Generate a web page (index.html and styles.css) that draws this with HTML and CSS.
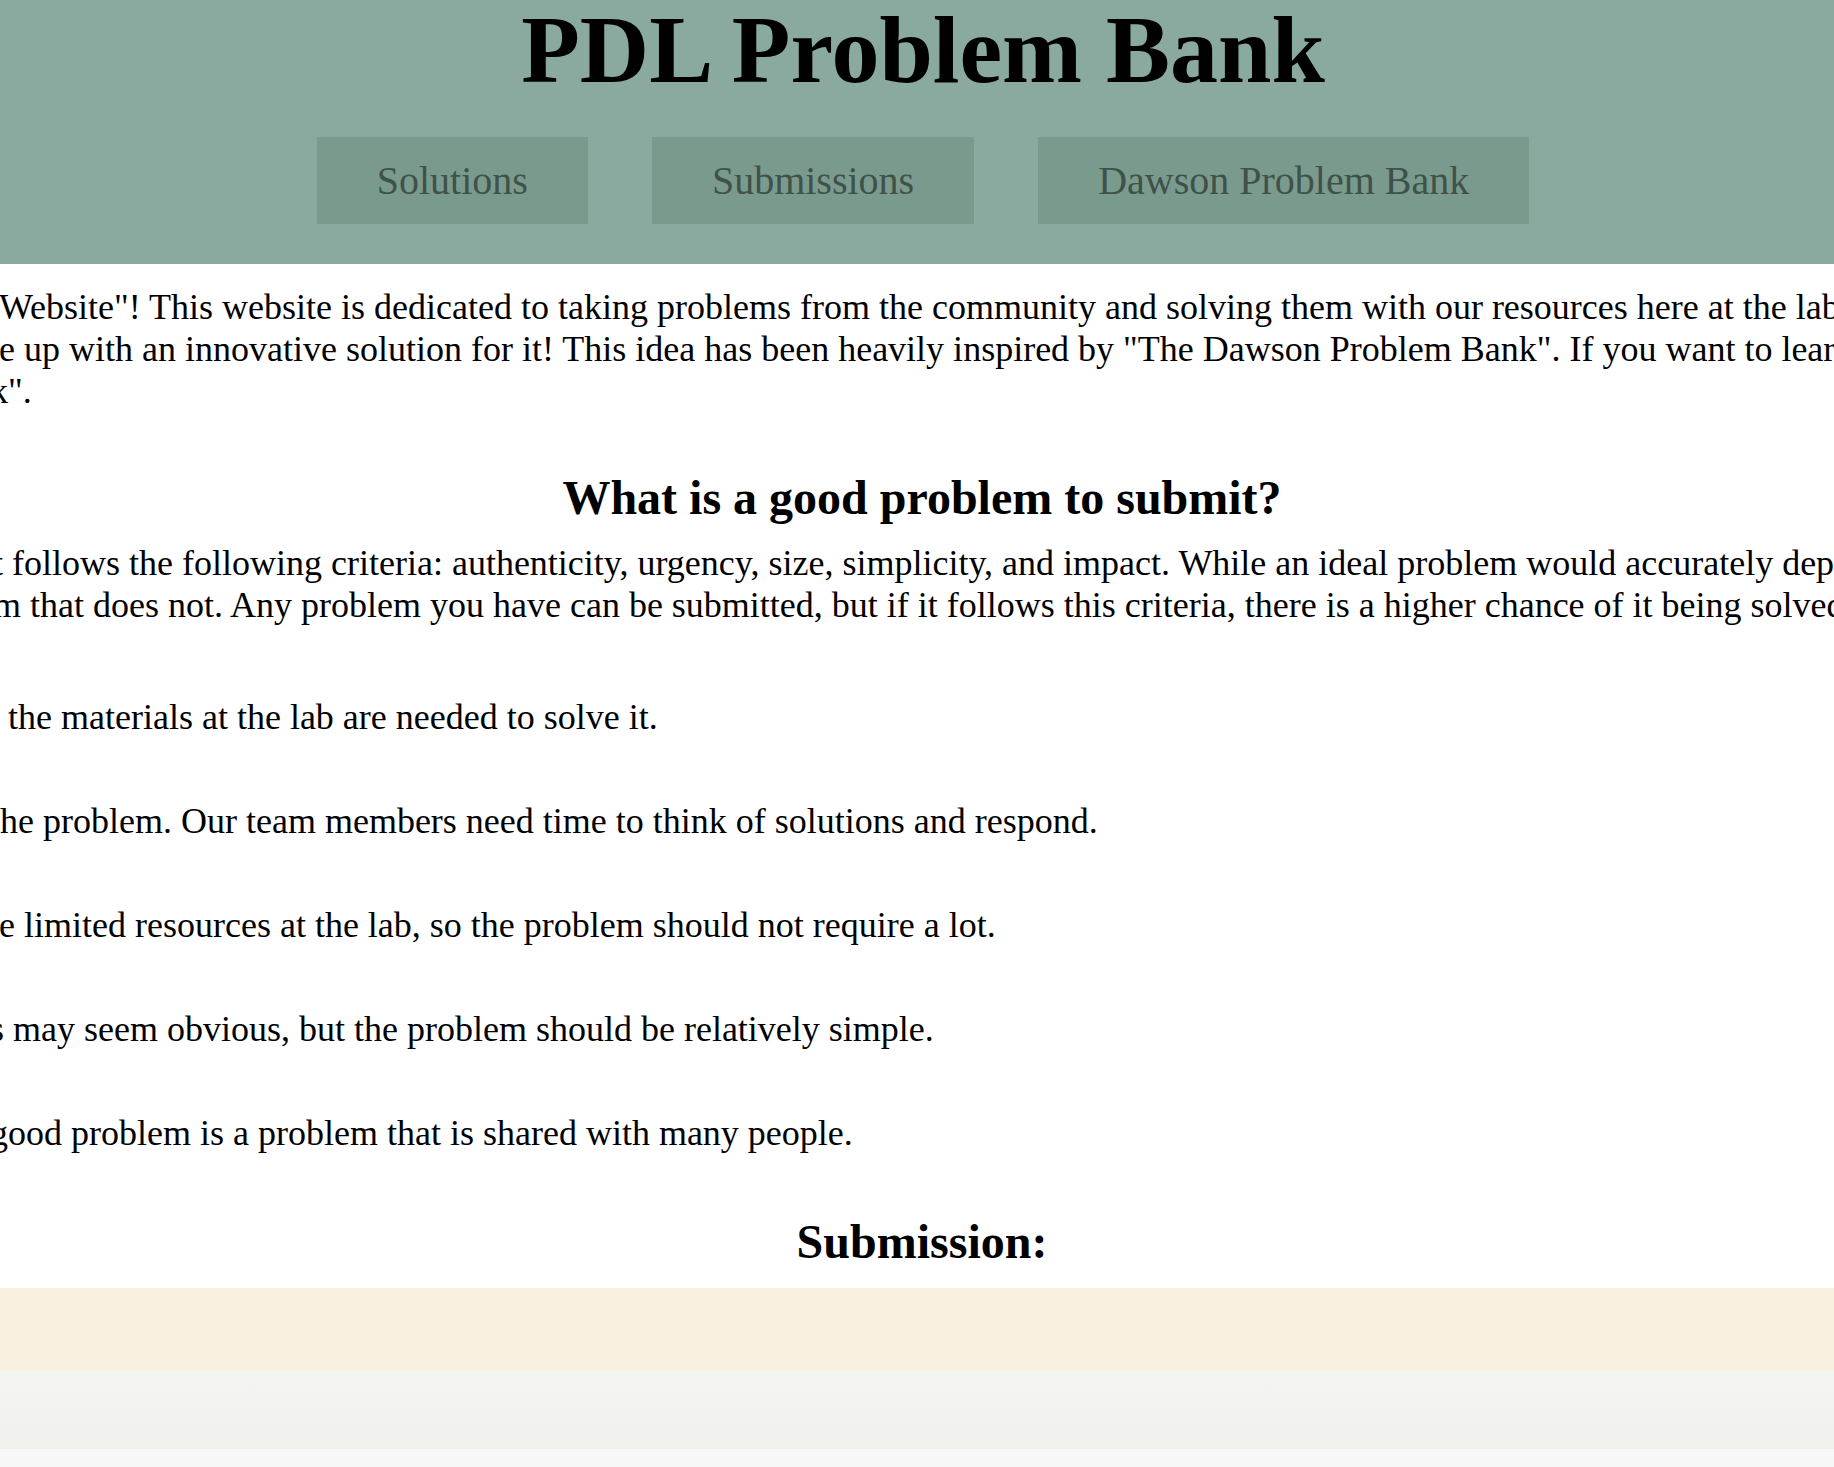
FILE: index.html
```html
<!DOCTYPE html>
<html lang="en">
<head>
<meta charset="utf-8">
<title>PDL Problem Bank</title>
<link rel="stylesheet" href="styles.css">
</head>
<body>
<header class="site-header">
  <h1 class="site-title">PDL Problem Bank</h1>
  <nav class="nav">
    <a class="nav-btn" href="#">Solutions</a>
    <a class="nav-btn" href="#">Submissions</a>
    <a class="nav-btn" href="#">Dawson Problem Bank</a>
  </nav>
</header>
<main class="content">
  <p class="text intro">&nbsp;Website"! This website is dedicated to taking problems from the community and solving them with our resources here at the lab.<br>&nbsp;e up with an innovative solution for it! This idea has been heavily inspired by "The Dawson Problem Bank". If you want to learn<br>k".</p>
  <h2 class="heading">What is a good problem to submit?</h2>
  <p class="text criteria">&#8202;t follows the following criteria: authenticity, urgency, size, simplicity, and impact. While an ideal problem would accurately depict<br>&#8202;m that does not. Any problem you have can be submitted, but if it follows this criteria, there is a higher chance of it being solved.</p>
  <ul class="criteria-list">
    <li class="criterion">, the materials at the lab are needed to solve it.</li>
    <li class="criterion">the problem. Our team members need time to think of solutions and respond.</li>
    <li class="criterion">&nbsp;e limited resources at the lab, so the problem should not require a lot.</li>
    <li class="criterion">s may seem obvious, but the problem should be relatively simple.</li>
    <li class="criterion">good problem is a problem that is shared with many people.</li>
  </ul>
  <h2 class="heading submission-heading">Submission:</h2>
</main>
<section class="form-band"></section>
<footer class="footer-band"></footer>
<div class="bottom-strip"></div>
</body>
</html>
```

FILE: styles.css
```css
html, body {
  margin: 0;
  padding: 0;
  overflow-x: hidden;
  background: #ffffff;
}

body {
  font-family: "Liberation Serif", "Times New Roman", serif;
  color: #000000;
}

.site-header {
  box-sizing: border-box;
  height: 264px;
  background: #8aaa9f;
  display: flex;
  flex-direction: column;
  align-items: center;
  padding-left: 12px;
}

.site-title {
  margin: 0;
  font-size: 96px;
  line-height: 100px;
  font-weight: bold;
}

.nav {
  margin-top: 37px;
  display: flex;
  gap: 64px;
}

.nav-btn {
  display: block;
  padding: 20px 60px;
  font-size: 40px;
  line-height: 47px;
  background: #7b9a8e;
  color: #3f5249;
  text-decoration: none;
}

.content {
  display: flex;
  flex-direction: column;
}

.text {
  margin: 0 0 0 -10px;
  font-size: 36px;
  line-height: 42px;
  white-space: nowrap;
}

.intro {
  margin-top: 22px;
}

.heading {
  margin: 58px 0 0 0;
  padding-left: 10px;
  text-align: center;
  font-size: 48px;
  line-height: 55px;
  font-weight: bold;
}

.criteria {
  margin-top: 17px;
}

.criteria-list {
  list-style: none;
  margin: 70px 0 0 -10px;
  padding: 0;
  display: flex;
  flex-direction: column;
  gap: 62px;
}

.criterion {
  font-size: 36px;
  line-height: 42px;
  white-space: nowrap;
}

.submission-heading {
  margin-top: 60px;
}

.form-band {
  margin-top: 19px;
  height: 82px;
  background: #f8f1e0;
}

.footer-band {
  height: 79px;
  background: linear-gradient(#f4f4f0, #f0f0ec);
}

.bottom-strip {
  height: 18px;
  background: #f7f7f7;
}
```
